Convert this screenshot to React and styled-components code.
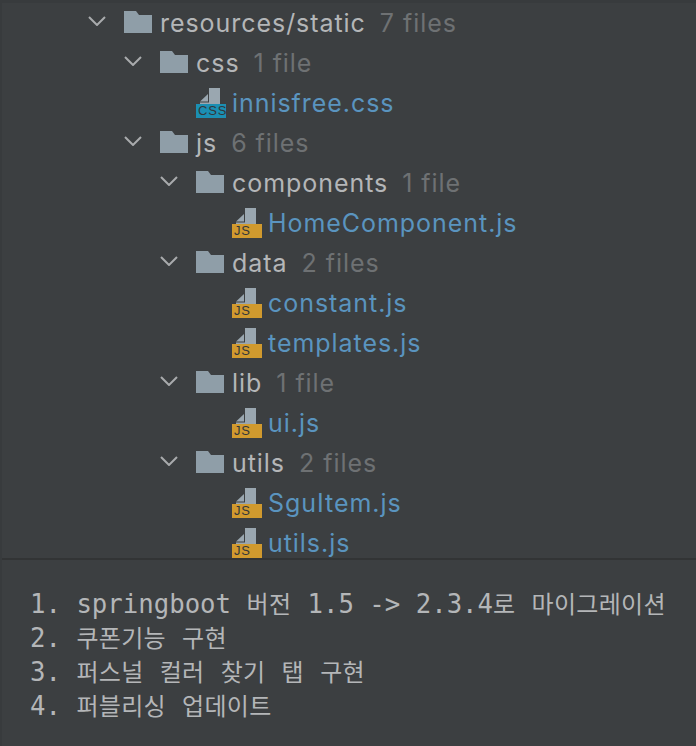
import React from 'react'
import styled, { createGlobalStyle } from 'styled-components'

const GlobalStyle = createGlobalStyle`
  html, body {
    margin: 0;
    padding: 0;
    background: #3c3f41;
  }
`

const tree = [
  { type: 'folder', depth: 0, name: 'resources/static', count: '7 files' },
  { type: 'folder', depth: 1, name: 'css', count: '1 file' },
  { type: 'file', depth: 2, name: 'innisfree.css', kind: 'css' },
  { type: 'folder', depth: 1, name: 'js', count: '6 files' },
  { type: 'folder', depth: 2, name: 'components', count: '1 file' },
  { type: 'file', depth: 3, name: 'HomeComponent.js', kind: 'js' },
  { type: 'folder', depth: 2, name: 'data', count: '2 files' },
  { type: 'file', depth: 3, name: 'constant.js', kind: 'js' },
  { type: 'file', depth: 3, name: 'templates.js', kind: 'js' },
  { type: 'folder', depth: 2, name: 'lib', count: '1 file' },
  { type: 'file', depth: 3, name: 'ui.js', kind: 'js' },
  { type: 'folder', depth: 2, name: 'utils', count: '2 files' },
  { type: 'file', depth: 3, name: 'SguItem.js', kind: 'js' },
  { type: 'file', depth: 3, name: 'utils.js', kind: 'js' },
]

function Ko({ children }) {
  return <KoText>{children}</KoText>
}

const notes = [
  ['1. springboot ', <Ko key="a">버전 </Ko>, '1.5 -> 2.3.4', <Ko key="b">로 마이그레이션</Ko>],
  ['2. ', <Ko key="a">쿠폰기능 구현</Ko>],
  ['3. ', <Ko key="a">퍼스널 컬러 찾기 탭 구현</Ko>],
  ['4. ', <Ko key="a">퍼블리싱 업데이트</Ko>],
]

const Chevron = () => (
  <svg width="18" height="10" viewBox="0 0 18 10">
    <path d="M1 1 L9 9 L17 1" fill="none" stroke="#a9abad" strokeWidth="2" />
  </svg>
)

const Folder = () => (
  <svg width="28" height="22" viewBox="0 0 28 22">
    <path d="M0 0 H12 L15 4 H28 V22 H0 Z" fill="#8f9ea8" />
  </svg>
)

const FileIcon = ({ kind }) => (
  <IconBox>
    <svg width="30" height="16" viewBox="0 0 30 16">
      <path d="M13 0 H24 V16 H4 V14.5 H13 Z" fill="#9aa7b0" />
      <path d="M4 13.5 L12 6 V13.5 Z" fill="#9aa7b0" />
    </svg>
    <Badge kind={kind}>{kind.toUpperCase()}</Badge>
  </IconBox>
)

const App = () => (
  <>
    <GlobalStyle />
    <Page>
      <Tree>
        {tree.map((item) => (
          <Row key={item.name} depth={item.depth}>
            {item.type === 'folder' ? (
              <>
                <ChevronSlot>
                  <Chevron />
                </ChevronSlot>
                <FolderSlot>
                  <Folder />
                </FolderSlot>
                <Name>{item.name}</Name>
                <Count>{item.count}</Count>
              </>
            ) : (
              <>
                <ChevronSlot />
                <FileIcon kind={item.kind} />
                <FileName>{item.name}</FileName>
              </>
            )}
          </Row>
        ))}
      </Tree>
      <Notes>
        {notes.map((line, i) => (
          <Line key={i}>{line}</Line>
        ))}
      </Notes>
    </Page>
  </>
)

const Page = styled.div`
  width: 696px;
  height: 746px;
  box-sizing: border-box;
  border-top: 3px solid #383b3d;
  border-left: 2px solid #383b3d;
  background: #3c3f41;
  overflow: hidden;
`

const Tree = styled.div`
  height: 555px;
  overflow: hidden;
  border-bottom: 2px solid #323435;
`

const Row = styled.div`
  display: flex;
  align-items: center;
  height: 40px;
  padding-left: ${(p) => 86 + p.depth * 36}px;
  font-family: Inter, 'Liberation Sans', sans-serif;
  font-size: 25px;
  letter-spacing: 0.95px;
  white-space: nowrap;
`

const ChevronSlot = styled.div`
  width: 36px;
  flex: none;
  display: flex;
  padding-bottom: 4px;
`

const FolderSlot = styled.div`
  width: 36px;
  flex: none;
  display: flex;
  padding-bottom: 3px;
`

const IconBox = styled.div`
  width: 30px;
  height: 30px;
  flex: none;
  margin-right: 6px;
  display: flex;
  flex-direction: column;
`

const Badge = styled.span`
  display: block;
  height: 14px;
  background: ${(p) => (p.kind === 'css' ? '#1b8fb3' : '#d19a2e')};
  color: #33373a;
  font-family: 'Liberation Sans', sans-serif;
  font-size: 13px;
  line-height: 14px;
  letter-spacing: 0.8px;
  padding-left: 2px;
`

const Name = styled.span`
  color: #b4b6b8;
`

const Count = styled.span`
  margin-left: 14px;
  color: #6e7173;
`

const FileName = styled.span`
  color: #5a94bf;
`

const Notes = styled.div`
  padding: 26px 0 0 28px;
  font-family: 'DejaVu Sans Mono', 'Liberation Mono', monospace;
  font-size: 25.7px;
  line-height: 34px;
  color: #b4b6b8;
  white-space: pre;
`

const Line = styled.div`
  height: 34px;
`

const KoText = styled.span`
  font-family: 'Noto Sans CJK KR', sans-serif;
  font-size: 24px;
  letter-spacing: 0.3px;
  word-spacing: 10.5px;
`

export default App
